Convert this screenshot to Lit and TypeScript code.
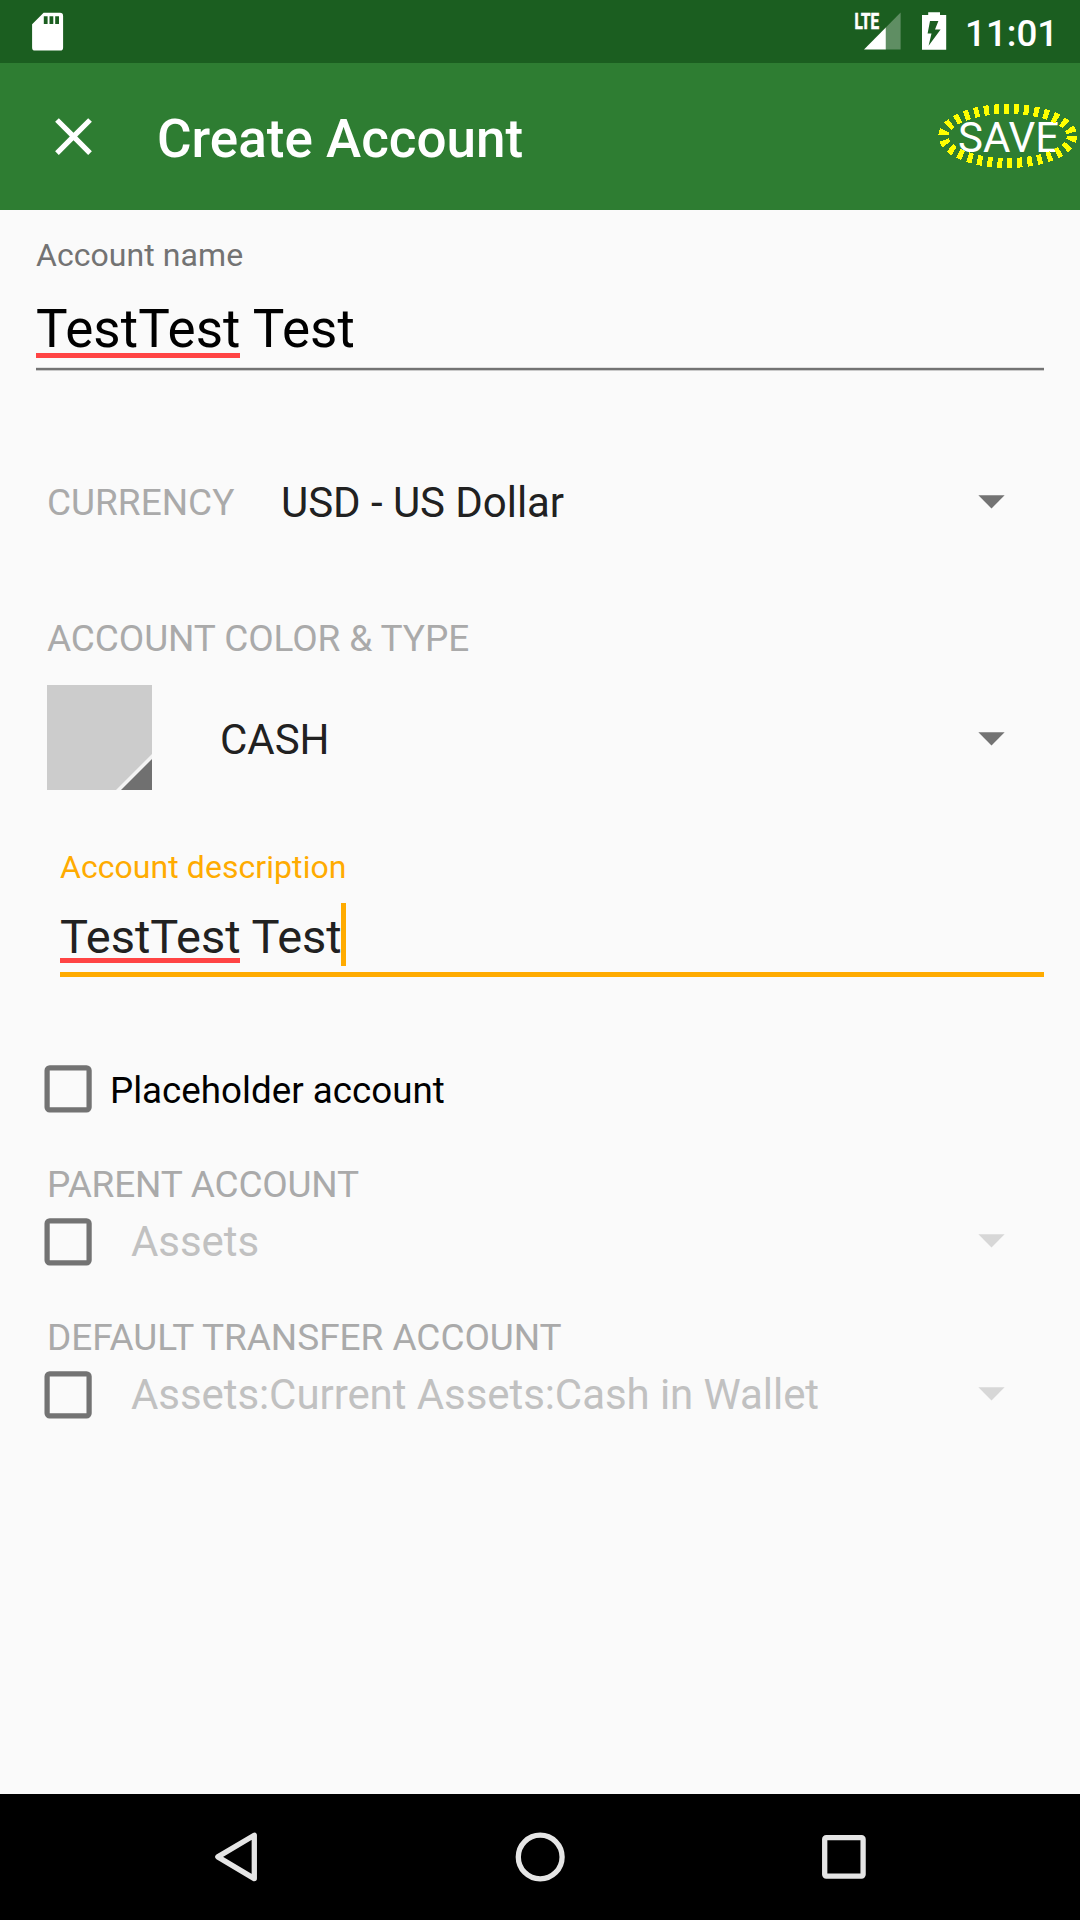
import { LitElement, html, svg, css } from "lit";
import { customElement, property } from "lit/decorators.js";
import { classMap } from "lit/directives/class-map.js";

@customElement("status-bar")
class StatusBar extends LitElement {
  static styles = css`
    :host {
      display: flex;
      justify-content: space-between;
      height: 63px;
      background: #1b5e20;
    }
    svg {
      display: block;
    }
    .right {
      display: flex;
    }
    .clock {
      width: 115px;
      padding-top: 1.5px;
      box-sizing: border-box;
      color: #fff;
      font: 500 36.75px/64px Roboto, sans-serif;
    }
    .net {
      font: 700 21.8px Roboto, sans-serif;
      stroke: #fff;
      stroke-width: 0.7px;
    }
  `;
  render() {
    return html`
      <svg width="100" height="63" fill="#fff">
        <path
          fill-rule="evenodd"
          d="M43.6 12.7H60Q63.1 12.7 63.1 15.9V47.4Q63.1 50.6 60 50.6H35.2Q32.1 50.6 32.1 47.4V24.3ZM43.8 16.3V24H47.6V16.3ZM49.5 16.3V24H53.3V16.3ZM55.2 16.3V24H59V16.3Z"
        />
      </svg>
      <div class="right">
        <svg width="113" height="63" viewBox="852 0 113 63" fill="#fff">
          <text class="net" x="854.5" y="29" textLength="24.5" lengthAdjust="spacingAndGlyphs">LTE</text>
          <path d="M864 49.4L885.8 27.4V49.4Z" />
          <path d="M885.8 27.4L900.6 12.6V49.4H885.8Z" fill-opacity=".3" />
          <path
            fill-rule="evenodd"
            d="M928.2 12.3H940V15H946.2V49.8H922V15H928.2ZM930 21H938.4L935 29.4H940.6L928.6 45.8L931.5 33.6H927.6Z"
          />
        </svg>
        <div class="clock">11:01</div>
      </div>
    `;
  }
}

@customElement("app-bar")
class AppBar extends LitElement {
  static styles = css`
    :host {
      display: flex;
      align-items: center;
      height: 147px;
      box-sizing: border-box;
      padding-left: 42px;
      background: #2e7d32;
      color: #fff;
      font-family: Roboto, sans-serif;
    }
    .close {
      width: 63px;
      height: 63px;
      fill: #fff;
    }
    .title {
      flex: 1;
      margin-left: 52px;
      padding-top: 5px;
      font-size: 53px;
      font-weight: 500;
      line-height: 62px;
    }
    .save {
      position: relative;
      width: 122px;
      padding-top: 2px;
      font-size: 42px;
      line-height: 50px;
    }
    .ring {
      position: absolute;
      left: -22px;
      top: -8.5px;
      width: 144px;
      height: 68px;
      fill: none;
      stroke: #ff0;
      stroke-width: 10;
      stroke-dasharray: 5 5;
    }
  `;
  render() {
    return html`
      <svg class="close" viewBox="0 0 24 24">
        <path
          d="M19 6.41L17.59 5 12 10.59 6.41 5 5 6.41 10.59 12 5 17.59 6.41 19 12 13.41 17.59 19 19 17.59 13.41 12z"
        />
      </svg>
      <div class="title">Create Account</div>
      <div class="save">
        SAVE
        <svg class="ring" viewBox="936 102 144 68">
          <ellipse cx="1007.7" cy="136" rx="64.3" ry="27" shape-rendering="crispEdges" />
        </svg>
      </div>
    `;
  }
}

@customElement("text-field")
class TextField extends LitElement {
  @property() label = "";
  @property() flagged = "";
  @property() rest = "";
  @property({ type: Boolean }) active = false;
  static styles = css`
    :host {
      display: block;
      font-family: Roboto, sans-serif;
    }
    .label {
      font-size: 32px;
      line-height: 38px;
      letter-spacing: 0.06px;
      color: #737373;
    }
    .value {
      display: flex;
      margin-top: 24px;
      height: 69px;
      font-size: 53px;
      line-height: 62px;
      letter-spacing: 0.1px;
      color: #000;
      white-space: pre;
    }
    .word {
      position: relative;
    }
    .word::after {
      content: "";
      position: absolute;
      left: 0;
      right: 0.8px;
      top: 55px;
      height: 5px;
      background: #ff4444;
    }
    .line {
      height: 4px;
      background: linear-gradient(#e0e0e0 1px, #737373 1px 3px, #cacaca 3px);
    }
    .active .label {
      color: #ffab00;
    }
    .active .value {
      margin-top: 17px;
      height: 69px;
      font-size: 47px;
      line-height: 67px;
      letter-spacing: 0;
      color: #212121;
    }
    .active .line {
      height: 5px;
      background: #ffab00;
    }
    .caret {
      width: 5px;
      height: 63px;
      margin-left: -1px;
      background: #ffab00;
    }
  `;
  render() {
    return html`<div class=${classMap({ active: this.active })}>
      <div class="label">${this.label}</div>
      <div class="value"><span class="word">${this.flagged}</span><span> ${this.rest}</span>${
        this.active ? html`<span class="caret"></span>` : ""
      }</div>
      <div class="line"></div>
    </div>`;
  }
}

@customElement("spinner-select")
class SpinnerSelect extends LitElement {
  @property() value = "";
  @property({ type: Boolean }) disabled = false;
  static styles = css`
    :host {
      display: flex;
      flex: 1;
      align-items: center;
      justify-content: space-between;
      padding-right: 75px;
      font: 42px/50px Roboto, sans-serif;
      letter-spacing: -0.05px;
      color: #212121;
    }
    :host([disabled]) {
      color: #c1c1c1;
      letter-spacing: -0.07px;
    }
    .arrow {
      width: 27px;
      height: 14px;
      margin-bottom: 2px;
      fill: #737373;
    }
    :host([disabled]) .arrow {
      fill: #d7d7d7;
    }
  `;
  render() {
    return html`<span>${this.value}</span>
      <svg class="arrow" viewBox="0 0 27 14"><path d="M.4 .3H26.6L13.5 13.4Z" /></svg>`;
  }
}

@customElement("check-box")
class CheckBox extends LitElement {
  static styles = css`
    :host {
      display: block;
      width: 48px;
      height: 48px;
    }
    svg {
      display: block;
      width: 48px;
      height: 48px;
      overflow: visible;
    }
  `;
  render() {
    return html`<svg viewBox="0 0 48 48">
      <rect x="2.1" y="2.9" width="42" height="42" rx="2.6" fill="none" stroke="#737373" stroke-width="5.25" />
    </svg>`;
  }
}

const NAV_ICONS = [
  svg`<path d="M254.3 1835.2V1878.6L217.8 1856.9Z" stroke-linejoin="round" />`,
  svg`<circle cx="540.2" cy="1857" r="21.9" />`,
  svg`<rect x="824.7" y="1837.7" width="38.4" height="38.4" rx="1.5" />`,
];

@customElement("nav-bar")
class NavBar extends LitElement {
  static styles = css`
    :host {
      display: block;
      height: 126px;
      background: #000;
    }
    .icons {
      display: block;
      fill: none;
      stroke: #e5e5e5;
      stroke-width: 5.3;
    }
  `;
  render() {
    return html`<svg class="icons" width="1080" height="126" viewBox="0 1794 1080 126">${NAV_ICONS}</svg>`;
  }
}

@customElement("app-root")
class AppRoot extends LitElement {
  static styles = css`
    :host {
      display: flex;
      flex-direction: column;
      width: 1080px;
      height: 1920px;
      overflow: hidden;
      background: #fafafa;
      font-family: Roboto, sans-serif;
    }
    .form {
      flex: 1;
      display: flex;
      flex-direction: column;
      padding: 26px 0 0 36px;
    }
    .name,
    .description {
      margin-right: 36px;
    }
    .row {
      display: flex;
      align-items: center;
      height: 50px;
    }
    .caption {
      font-size: 37px;
      line-height: 44px;
      color: #aaa;
      margin-left: 11px;
    }
    .currency {
      margin-top: 107px;
    }
    .currency .caption {
      width: 234px;
    }
    .color-caption {
      margin-top: 89px;
      letter-spacing: -0.1px;
    }
    .type {
      margin: 24px 0 0 11px;
      height: 105px;
    }
    .type spinner-select {
      padding-top: 5px;
    }
    .swatch {
      width: 105px;
      height: 105px;
      margin-right: 68px;
    }
    .description {
      margin-top: 58px;
      margin-left: 24px;
    }
    .option {
      padding-left: 9px;
      height: 48px;
    }
    .placeholder {
      margin-top: 88px;
    }
    .placeholder-label {
      margin-left: 17px;
      padding-top: 3px;
      font-size: 36.75px;
      line-height: 44px;
      color: #000;
    }
    .parent-caption {
      margin-top: 50px;
      letter-spacing: -0.2px;
    }
    .transfer-caption {
      margin-top: 50px;
      letter-spacing: -0.04px;
    }
    .linked {
      margin-top: 11px;
    }
    .linked spinner-select {
      margin-left: 38px;
    }
  `;
  render() {
    return html`
      <status-bar></status-bar>
      <app-bar></app-bar>
      <div class="form">
        <text-field class="name" label="Account name" flagged="TestTest" rest="Test"></text-field>
        <div class="row currency">
          <span class="caption">CURRENCY</span>
          <spinner-select value="USD - US Dollar"></spinner-select>
        </div>
        <div class="caption color-caption">ACCOUNT COLOR &amp; TYPE</div>
        <div class="row type">
          <svg class="swatch" viewBox="0 0 105 105">
            <path fill="#ccc" d="M0 0H105V105H0Z" />
            <path fill="#f3f3f3" d="M105 69V105H69Z" />
            <path fill="#707070" d="M105 74V105H74Z" />
          </svg>
          <spinner-select value="CASH"></spinner-select>
        </div>
        <text-field class="description" active label="Account description" flagged="TestTest" rest="Test"></text-field>
        <div class="row option placeholder">
          <check-box></check-box>
          <span class="placeholder-label">Placeholder account</span>
        </div>
        <div class="caption parent-caption">PARENT ACCOUNT</div>
        <div class="row option linked">
          <check-box></check-box>
          <spinner-select disabled value="Assets"></spinner-select>
        </div>
        <div class="caption transfer-caption">DEFAULT TRANSFER ACCOUNT</div>
        <div class="row option linked">
          <check-box></check-box>
          <spinner-select disabled value="Assets:Current Assets:Cash in Wallet"></spinner-select>
        </div>
      </div>
      <nav-bar></nav-bar>
    `;
  }
}
